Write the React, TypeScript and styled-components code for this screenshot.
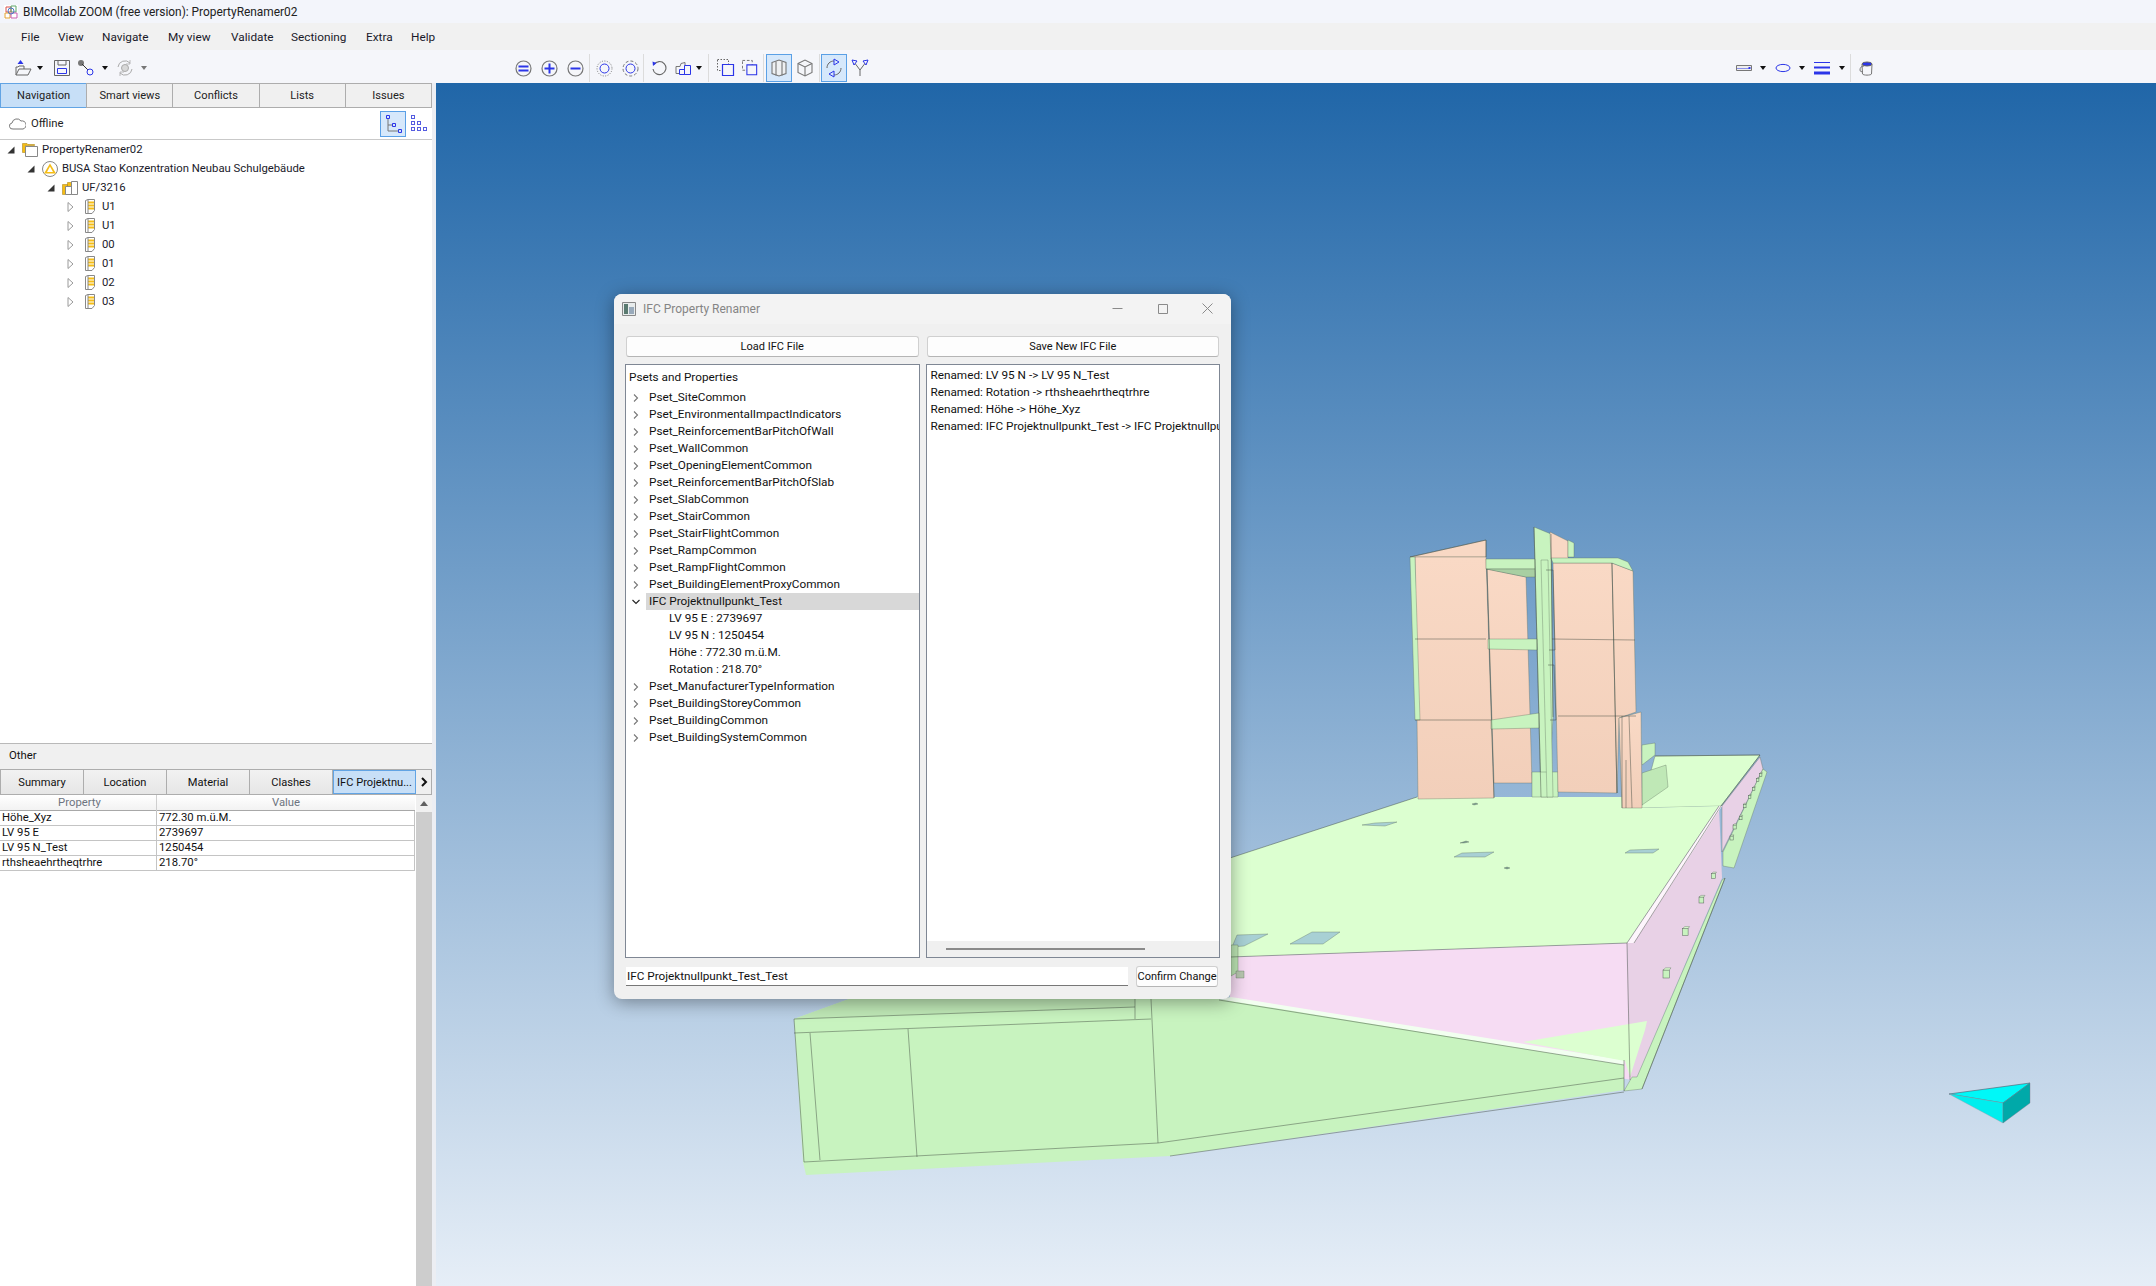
import React from "react";
import styled, { createGlobalStyle } from "styled-components";

const UI = `Roboto, "Open Sans", sans-serif`;

const Global = createGlobalStyle`
  html, body { margin: 0; padding: 0; height: 100%; overflow: hidden; background: #fff; }
  #root { height: 100%; }
  * { box-sizing: border-box; }
`;

const Page = styled.div`
  width: 2156px; height: 1286px; display: flex; flex-direction: column;
  font-family: ${UI}; font-size: 11.75px; color: #111; overflow: hidden;
`;
const TitleBar = styled.div`
  height: 23px; display: flex; align-items: center; gap: 4px; padding: 0 0 0 3px;
  background: #f3f5fb; font-size: 11.9px; color: #222;
`;
const MenuBar = styled.div`
  height: 27px; display: flex; align-items: center; padding-left: 21px; background: #f1f1f1; font-size: 11.8px;
`;
const MenuItem = styled.span<{ $w: number }>`
  width: ${p => p.$w}px; color: #1a1a2a;
`;
const Toolbar = styled.div`
  height: 33px; display: flex; align-items: center; background: #f5f6fa; padding: 4px 0 1px;
`;
const ToolGroup = styled.div<{ $w: number }>`
  width: ${p => p.$w}px; height: 100%; display: flex; align-items: center; flex: none;
`;
const Slot = styled.div<{ $w: number; $active?: boolean }>`
  width: ${p => p.$w}px; height: 28px; flex: none; display: flex; align-items: center; justify-content: center;
  ${p => p.$active ? "background: #d6e8fb; border: 1px solid #5aa0e6;" : ""}
`;
const Divider = styled.div`
  width: 1px; height: 28px; margin: 0 1px 0 0; background: #dcdcdc; flex: none;
`;
const Caret = styled.div<{ $gray?: boolean }>`
  width: 0; height: 0; border-left: 3.5px solid transparent; border-right: 3.5px solid transparent;
  border-top: 4px solid ${p => p.$gray ? "#777" : "#111"};
`;
const Main = styled.div`
  flex: 1; display: flex; min-height: 0;
`;
const LeftPanel = styled.div`
  width: 432px; flex: none; display: flex; flex-direction: column; background: #fff; font-size: 11.3px;
`;
const Gutter = styled.div`
  width: 4px; flex: none; background: #eceef3;
`;
const NavTabs = styled.div`
  height: 25px; display: flex; flex: none; padding-left: 1px; font-size: 11.1px;
`;
const NavTab = styled.div<{ $active?: boolean }>`
  flex: 1; display: flex; align-items: center; justify-content: center; background: ${p => p.$active ? "#c7dff7" : "#f0f0f0"};
  border: 1px solid ${p => p.$active ? "#62a4e4" : "#adadad"}; margin-left: -1px; color: #222;
`;
const OfflineRow = styled.div`
  height: 32px; flex: none; display: flex; align-items: center; padding: 0 0 0 9px; border-bottom: 1px solid #c9c9c9;
`;
const OfflineLabel = styled.span`
  margin-left: 5px; flex: 1; color: #222;
`;
const ViewToggle = styled.div<{ $active?: boolean }>`
  width: 26px; height: 26px; display: flex; align-items: center; justify-content: center;
  ${p => p.$active ? "background: #d6e8fb; border: 1px solid #5aa0e6;" : ""}
`;
const Tree = styled.div`
  flex: 1; min-height: 0;
`;
const TreeRow = styled.div<{ $depth: number }>`
  height: 19px; display: flex; align-items: center; padding-left: ${p => 5 + p.$depth * 20}px; color: #1a1a2a;
`;
const ArrowBox = styled.div`
  width: 11px; height: 19px; display: flex; align-items: center; justify-content: center; margin-right: 6px; flex: none;
`;
const IconBox = styled.div`
  width: 16px; height: 19px; display: flex; align-items: center; justify-content: center; margin-right: 4px; flex: none;
`;
const OtherHeader = styled.div`
  height: 26px; flex: none; display: flex; align-items: center; padding: 0 0 2px 9px; background: #f0f0f0;
  border-top: 1px solid #b9b9b9;
`;
const PropTabs = styled.div`
  height: 26px; flex: none; display: flex; border: 1px solid #adadad; background: #efefef; font-size: 11.1px;
`;
const PropTab = styled.div<{ $active?: boolean }>`
  width: 83px; display: flex; align-items: center; justify-content: center; white-space: nowrap; overflow: hidden;
  background: ${p => p.$active ? "#c7dff7" : "linear-gradient(#f2f2f2, #e6e6e6)"};
  border: 1px solid ${p => p.$active ? "#62a4e4" : "transparent"}; border-right-color: ${p => p.$active ? "#62a4e4" : "#adadad"};
  border-width: ${p => p.$active ? "1px" : "0 1px 0 0"};
`;
const PropArrow = styled.div`
  flex: 1; display: flex; align-items: center; justify-content: center;
`;
const PropBody = styled.div`
  height: 491px; flex: none; display: flex; min-height: 0;
`;
const PropTable = styled.div`
  width: 415px; flex: none;
`;
const PropHead = styled.div`
  height: 16px; display: grid; grid-template-columns: 157px 1fr; border-bottom: 1px solid #a8a8a8;
  background: linear-gradient(#fff, #f2f2f2); color: #6d7480; text-align: center; line-height: 16px;
`;
const PropHeadCell = styled.div`
  border-right: 1px solid #cfcfcf; padding-left: 3px;
`;
const PropRow = styled.div`
  height: 15px; display: grid; grid-template-columns: 157px 1fr; border-bottom: 1px solid #c4c4c4; border-right: 1px solid #c4c4c4;
  line-height: 14px;
`;
const PropCell = styled.div`
  padding-left: 2px; white-space: nowrap; border-right: 1px solid #c4c4c4;
  &:last-child { border-right: none; }
`;
const Scrollbar = styled.div`
  width: 16px; margin-left: 1px; flex: none; display: flex; flex-direction: column;
`;
const ScrollUp = styled.div`
  height: 17px; background: #f0f0f0; display: flex; align-items: center; justify-content: center;
`;
const ScrollThumb = styled.div`
  flex: 1; background: #cdcdcd;
`;
const Viewport = styled.div`
  flex: 1; position: relative; overflow: hidden; background: linear-gradient(#2066a8, #e6eef7);
`;
const SceneSvg = styled.svg`
  position: absolute; inset: 0; width: 100%; height: 100%; display: block;
`;
const Dialog = styled.div`
  position: absolute; left: 178px; top: 211px; width: 617px; height: 705px; border-radius: 8px; overflow: hidden;
  background: #f0f0f0; box-shadow: 0 3px 18px rgba(0,0,0,.38); display: flex; flex-direction: column;
`;
const DialogTitle = styled.div`
  height: 30px; flex: none; display: flex; align-items: center; padding: 0 1px 1px 8px; background: #f3f3f3; color: #858585; font-size: 12px;
`;
const DialogTitleText = styled.span`
  margin-left: 7px; flex: 1;
`;
const WinBtn = styled.div`
  width: 45px; height: 28px; display: flex; align-items: center; justify-content: center; flex: none;
`;
const DialogBody = styled.div`
  flex: 1; display: flex; flex-direction: column; padding: 12px 11px 12px 11px; min-height: 0;
`;
const ButtonRow = styled.div`
  height: 21px; flex: none; display: flex; gap: 8px; margin: 0 1px;
`;
const QtButton = styled.div`
  flex: 1; display: flex; align-items: center; justify-content: center; background: #fdfdfd; border: 1px solid #d0d0d0;
  border-bottom-color: #b5b5b5; border-radius: 3px; white-space: nowrap; font-size: 11px;
`;
const Panels = styled.div`
  flex: 1; display: flex; gap: 6px; margin-top: 7px; min-height: 0;
`;
const ListPanel = styled.div`
  flex: 1; min-width: 0; background: #fff; border: 1px solid #7f8794; display: flex; flex-direction: column; overflow: hidden;
`;
const ListHeader = styled.div`
  height: 17px; margin: 4px 0 3px; padding-left: 3px; line-height: 17px; flex: none;
`;
const PsetRow = styled.div`
  height: 17px; display: flex; flex: none; align-items: center; line-height: 17px; white-space: nowrap;
`;
const PsetArrow = styled.div`
  width: 20px; display: flex; align-items: center; justify-content: center; flex: none;
`;
const PsetName = styled.div<{ $selected?: boolean }>`
  flex: 1; padding-left: 3px; height: 17px; ${p => p.$selected ? "background: #d8d8d8;" : ""}
`;
const ChildRow = styled.div`
  height: 17px; flex: none; padding-left: 43px; line-height: 17px; white-space: nowrap;
`;
const LogLines = styled.div`
  flex: 1; padding: 2px 0 0 4px; overflow: hidden; min-height: 0;
`;
const LogLine = styled.div`
  height: 17px; line-height: 17px; white-space: nowrap;
`;
const HScroll = styled.div`
  height: 16px; flex: none; background: #f0f0f0; padding: 7px 0 0 19px;
`;
const HThumb = styled.div`
  width: 199px; height: 2px; background: #8a8a8a;
`;
const InputRow = styled.div`
  height: 21px; flex: none; display: flex; margin: 8px 1px 0 1px; gap: 8px; align-items: center;
`;
const NameInput = styled.div`
  width: 502px; height: 19px; flex: none; background: #fff; border-bottom: 1px solid #777; line-height: 19px; padding-left: 1px; white-space: nowrap;
`;
const ConfirmButton = styled(QtButton)`
  flex: none; width: 82px; height: 21px; color: #111;
`;

/* icons */
const B = "#2b35e8";
const Logo = () => (
  <svg width="16" height="16" viewBox="0 0 16 16">
    <rect x="1" y="1" width="14" height="14" fill="#fff" />
    <path d="M3 3h5v5H3z" fill="none" stroke="#d9534f" />
    <path d="M8 2h5v6H8z" fill="none" stroke="#5aa469" />
    <path d="M2 9h5v5H2z" fill="none" stroke="#e0a030" />
    <path d="M8 9h6v5H8z" fill="none" stroke="#c85ab0" />
    <circle cx="8" cy="7" r="3" fill="none" stroke="#4a7ac8" />
  </svg>
);
const OpenIcon = () => (
  <svg width="18" height="18" viewBox="0 0 18 18" fill="none">
    <path d="M6.5 1 9.5 5h-6z" fill={B} />
    <path d="M2 16V8h2l1-1h5v3" stroke="#666" />
    <path d="M2 16l3-6h12l-3 6z" stroke="#666" fill="#f5f6fa" />
  </svg>
);
const SaveIcon = () => (
  <svg width="16" height="16" viewBox="0 0 16 16" fill="none">
    <path d="M.5.5h15v15H.5z" stroke="#666" />
    <path d="M4 1v4h8V1" stroke="#666" />
    <path d="M3.5 8.5h9v5h-9z" stroke={B} />
  </svg>
);
const NodeIcon = () => (
  <svg width="18" height="18" viewBox="0 0 18 18" fill="none">
    <circle cx="4" cy="4" r="3" fill="#777" />
    <path d="M5 5l7 7" stroke="#333" />
    <circle cx="13" cy="13" r="3" stroke={B} fill="#f5f6fa" />
  </svg>
);
const RotateIcon = () => (
  <svg width="18" height="18" viewBox="0 0 18 18" fill="none" stroke="#aaa">
    <circle cx="9" cy="9" r="3.5" fill="#d8d8d8" />
    <path d="M2 8a7 7 0 0 1 12-4M16 10a7 7 0 0 1-12 4" />
    <path d="M14 1v4h-4M4 17v-4h4" strokeWidth=".8" />
  </svg>
);
const CircleSign = ({ kind }: { kind: "eq" | "plus" | "minus" }) => (
  <svg width="17" height="17" viewBox="0 0 17 17" fill="none">
    <circle cx="8.5" cy="8.5" r="7.5" stroke="#777" strokeWidth="1.2" />
    {kind === "eq" && <path d="M3.5 6.5h10M3.5 10.5h10" stroke={B} strokeWidth="2" />}
    {kind === "plus" && <path d="M3.5 8.5h10M8.5 3.5v10" stroke={B} strokeWidth="2" />}
    {kind === "minus" && <path d="M3.5 8.5h10" stroke={B} strokeWidth="2" />}
  </svg>
);
const Ring = ({ dash }: { dash: string }) => (
  <svg width="17" height="17" viewBox="0 0 17 17" fill="none">
    <circle cx="8.5" cy="8.5" r="7.5" stroke="#777" strokeDasharray={dash} />
    <circle cx="8.5" cy="8.5" r="4.5" stroke={B} />
  </svg>
);
const UndoIcon = () => (
  <svg width="16" height="16" viewBox="0 0 16 16" fill="none">
    <path d="M3 4.5A6.5 6.5 0 1 1 2 9" stroke="#666" strokeWidth="1.1" />
    <path d="M1.5 1.5l4 1.5-3.5 3z" fill={B} />
  </svg>
);
const BoxesIcon = () => (
  <svg width="17" height="17" viewBox="0 0 17 17" fill="none">
    <path d="M1 6.5h4l1-3 4-1v3" stroke="#777" />
    <path d="M1 6.5v7h3" stroke="#777" />
    <path d="M4.5 9.5h5v5h-5zM9.5 5.5h6v9h-6z" stroke={B} />
  </svg>
);
const SelBox = ({ dash }: { dash: string }) => (
  <svg width="18" height="18" viewBox="0 0 18 18" fill="none">
    <path d="M.5.5h11v11H.5z" stroke="#666" strokeDasharray={dash} />
    <path d="M5.5 5.5h11v11h-11z" stroke={B} fill="#f5f6fa" strokeWidth="1.2" />
  </svg>
);
const CubeSplit = () => (
  <svg width="16" height="18" viewBox="0 0 16 18" fill="#eef0f2" stroke="#777" strokeWidth="1.1">
    <path d="M1 3.5 8 1l7 2.5v11L8 17l-7-2.5z" />
    <path d="M5 2.500v14M11 2.500v14" fill="none" />
  </svg>
);
const CubeIcon = () => (
  <svg width="16" height="18" viewBox="0 0 16 18" fill="#f5f6fa" stroke="#777" strokeWidth="1.1">
    <path d="M1 4.5 8 1l7 3.5v9L8 17l-7-3.5z" />
    <path d="M1 4.5 8 8l7-3.5M8 8v9" fill="none" />
  </svg>
);
const SyncIcon = () => (
  <svg width="18" height="20" viewBox="0 0 18 20" fill="none">
    <path d="M2 10c0-4 3-7 7-7M16 10c0 4-3 7-7 7" stroke="#666" />
    <path d="M9 1l5 3-5 3zM9 13l-5 3 5 3z" fill="#d6e8fb" stroke={B} />
  </svg>
);
const VIcon = () => (
  <svg width="18" height="18" viewBox="0 0 18 18" fill="none">
    <path d="M3 3l6 8v6M15 3l-6 8" stroke="#666" />
    <path d="M1 1l5 1-3 4zM17 1l-5 1 3 4z" fill="#f5f6fa" stroke={B} />
  </svg>
);
const RulerIcon = () => (
  <svg width="16" height="8" viewBox="0 0 16 8" fill="none">
    <path d="M.5 1.5h15v5H.5z" stroke="#777" fill="#eee" />
    <path d="M2 5V4M4 5V4M6 5V4M8 5V4M10 5V4M12 5V4" stroke={B} />
    <path d="M12.5 3h2v2h-2z" fill={B} />
  </svg>
);
const EllipseIcon = () => (
  <svg width="16" height="10" viewBox="0 0 16 10" fill="none"><ellipse cx="8" cy="5" rx="7" ry="3.6" stroke={B} /></svg>
);
const LinesIcon = () => (
  <svg width="16" height="13" viewBox="0 0 16 13"><path d="M0 .5h16" stroke="#2b35e8" /><path d="M0 5.5h16" stroke="#2b35e8" strokeWidth="2" /><path d="M0 11h16" stroke="#2b35e8" strokeWidth="3" /></svg>
);
const BucketIcon = () => (
  <svg width="14" height="15" viewBox="0 0 14 15" fill="none">
    <ellipse cx="8" cy="3" rx="5" ry="2" fill={B} stroke="#666" />
    <path d="M3 3l.5 10c1 1.5 8 1.5 9 0L13 3" stroke="#777" />
    <path d="M5 5C2 5 1 7 1 9s2 2 3 1" stroke="#777" />
  </svg>
);
const CloudIcon = () => (
  <svg width="17" height="12" viewBox="0 0 17 12" fill="none"><path d="M4 11a3 3 0 0 1-1-6 5 5 0 0 1 9-2 4 4 0 0 1 2 8z" stroke="#777" /></svg>
);
const HierIcon = () => (
  <svg width="18" height="18" viewBox="0 0 18 18" fill="none">
    <path d="M4 4v12h10M4 10h6" stroke="#777" />
    <path d="M2.500 .5h3v3h-3zM8.500 8.500h3v3h-3zM14.500 14.500h3v3h-3z" stroke={B} fill="#d6e8fb" />
  </svg>
);
const GridIcon = () => (
  <svg width="17" height="17" viewBox="0 0 17 17" fill="none" stroke="#555ce0">
    {[[1, 1], [1, 7], [7, 7], [1, 13], [7, 13], [13, 13]].map(([x, y]) => <rect key={x + "-" + y} x={x - .5} y={y - .5} width="3" height="3" />)}
  </svg>
);
const OpenArrow = () => (<svg width="8" height="8" viewBox="0 0 8 8"><path d="M7.500.5v7H.5z" fill="#333" /></svg>);
const ClosedArrow = () => (<svg width="7" height="10" viewBox="0 0 7 10" fill="#fff"><path d="M1 .5 6 5 1 9.500z" stroke="#9a9a9a" /></svg>);
const FolderIcon = () => (
  <svg width="16" height="14" viewBox="0 0 16 14" fill="none">
    <path d="M.5.5v9h3v-7h9v-1H6L5 .5z" fill="#f5bd16" stroke="#b08a20" strokeWidth=".6" />
    <path d="M3.500 3.500h12v10h-12z" fill="#fff" stroke="#888" />
  </svg>
);
const SiteIcon = () => (
  <svg width="16" height="16" viewBox="0 0 16 16" fill="none">
    <circle cx="8" cy="8" r="7.500" fill="#fff" stroke="#888" />
    <path d="M8 2.500 14 12.500H2z" fill="#f5bd16" />
    <path d="M8 5.500 11 11H5z" fill="#fff" />
  </svg>
);
const ProjectIcon = () => (
  <svg width="16" height="14" viewBox="0 0 16 14" fill="none">
    <path d="M.5 3.500h5v10h-5zM5.500 1.500h5v5h-5z" fill="#f5bd16" stroke="#b08a20" strokeWidth=".6" />
    <path d="M3.500 5.500h6v8h-6zM9.500 .5h6v13h-6z" fill="#fff" stroke="#888" />
  </svg>
);
const StoreyIcon = () => (
  <svg width="10" height="15" viewBox="0 0 10 15" fill="none">
    <path d="M.5 1.500 3 .5h6.500v11L7 14.500H.5z" fill="#fff" stroke="#888" />
    <path d="M3 3.500h6M3 6.500h6M3 9.500h6" stroke="#f5bd16" strokeWidth="2" />
    <path d="M3 .5v14" stroke="#888" />
  </svg>
);
const Chevron = ({ open }: { open?: boolean }) => (
  <svg width="10" height="10" viewBox="0 0 10 10" fill="none">
    <path d={open ? "M1.500 3 5 6.500 8.500 3" : "M3 1.500 6.500 5 3 8.500"} stroke={open ? "#222" : "#777"} strokeWidth="1.100" />
  </svg>
);
const TabNext = () => (
  <svg width="8" height="10" viewBox="0 0 8 10" fill="none"><path d="M2 1l4 4-4 4" stroke="#111" strokeWidth="2" /></svg>
);

/* scene: polygons in page coordinates */
type Poly = [string, string, boolean?];
const G = "#dcffd0", D = "#c8f3bf", M = "#bfe8b6", H = "#a8d0d4", PK = "#f6dcf3", PR = "#e8d1e6";
const scene: Poly[] = [
  ["1655,756 1760,755 1721,806 1641,808", G],
  ["1722,806 1760,757 1763,769 1722,852", PR],
  ["1723,852 1763,769 1767,772 1734,868 1723,866", D],
  ["1642,745 1655,743 1655,755 1642,765", D],
  ["1642,773 1666,765 1668,787 1642,805", M],
  ["1230,858 1417,797 1623,797 1641,808 1719,806 1627,943 1230,957", G, true],
  ["1230,957 1627,943 1632,1080 1230,1010", PK, true],
  ["1627,943 1719,806 1722,878 1637,1077 1629,1077", PR, true],
  ["1627,943 1719,806 1722,806 1634,943", "#fdf5fc", true],
  ["1725,878 1642,1089 1624,1091 1632,1077 1637,1077 1722,880", D],
  ["1362,825 1375,823 1397,822 1385,826", H],
  ["1454,857 1462,853 1494,852 1485,857", H],
  ["1625,853 1630,850 1659,849 1653,853", H],
  ["1290,944 1312,932 1340,932 1323,944", H],
  ["1232,947 1237,935 1268,934 1244,946", H],
  ["1460,843 1466,841 1469,842 1464,843", "#789a90"],
  ["1472,804 1476,803 1478,804 1474,805", "#789a90"],
  ["1504,868 1507,867 1510,868 1507,869", "#789a90"],
  ["1231,945 1238,945 1238,972 1231,976", M],
  ["1236,971 1244,971 1244,978 1236,978", "#b8c8b0"],
  ["1534,527 1551,534 1553,717 1548,797 1541,797", D],
  ["1550,532 1568,541 1568,559 1551,559", "#f8d8c4"],
  ["1568,540 1574,543 1574,557 1568,557", D],
  ["1410,557 1486,540 1486,557", "#f8d8c4"],
  ["1415,557 1486,557 1494,798 1418,799", "url(#peach)"],
  ["1410,557 1415,557 1420,720 1415,720", D],
  ["1487,569 1526,577 1532,783 1494,783", "url(#peach)"],
  ["1486,559 1535,559 1535,569 1486,569", D],
  ["1486,569 1535,569 1535,577 1526,577", "#a8cfa2"],
  ["1488,639 1537,639 1537,650 1488,649", D],
  ["1491,720 1539,713 1539,728 1491,729", D],
  ["1532,772 1558,772 1558,797 1532,797", D],
  ["1553,563 1612,563 1617,793 1558,792", "url(#peach)"],
  ["1612,563 1633,571 1636,712 1619,718 1617,793", "url(#peach)"],
  ["1619,718 1641,712 1642,808 1622,808", "url(#peach)"],
  ["1551,558 1618,558 1628,562 1633,571 1612,563 1553,563", D],
  ["1541,560 1548,560 1553,797 1547,797", D],
  ["794,1019 849,999 1219,999 1624,1060 1624,1090 1170,1156 806,1175 803,1162", D, true],
  ["794,1019 849,999 1135,999 1135,1007", M, true],
  ["1219,999 1231,997 1624,1060 1624,1065", "#f2fff0", true],
  ["1523,1042 1647,1021 1645,1030 1630,1077 1625,1061", G, true],
];
const lines: string[] = [
  "1415,639 1486,639", "1552,639 1635,640", "1415,720 1491,720", "1558,716 1636,716", "1612,563 1617,793",
  "1487,569 1494,798", "1622,716 1622,808", "1629,716 1632,808", "1626,760 1626,808",
  "794,1019 1135,1007", "794,1033 1151,1019", "1135,999 1135,1019", "1151,999 1158,1143", "794,1019 804,1162",
  "810,1033 820,1160", "908,1029 917,1157", "804,1162 1158,1143 1624,1078", "1170,1156 1624,1092", "1219,1000 1624,1065",
  "1624,1060 1624,1091", "1230,858 1417,797", "1230,957 1627,943", "1627,943 1630,1080", "1634,943 1721,806",
  "1627,943 1719,806", "1725,878 1642,1089", "1534,527 1541,797", "1551,534 1553,717", "1655,756 1760,755",
  "1760,755 1721,806", "1410,557 1486,540", "1486,540 1486,557", "1546,570 1553,570 1555,650 1549,650",
  "1548,665 1554,665 1556,720 1550,720",
];
const cubes: [number, number, number][] = [
  [1667, 974, 8], [1686, 932, 7], [1702, 900, 6], [1714, 876, 5], [1732, 838, 4], [1735, 827, 4], [1741, 818, 3.500], [1745, 806, 3.500],
  [1750, 797, 3], [1754, 789, 3], [1758, 780, 3], [1761, 775, 3],
];
const Scene = () => (
  <SceneSvg viewBox="436 83 1720 1203" preserveAspectRatio="none">
    <defs>
      <linearGradient id="peach" x1="0" y1="0" x2="0" y2="1">
        <stop offset="0" stopColor="#f9d9c5" /><stop offset="1" stopColor="#f2cfba" />
      </linearGradient>
    </defs>
    {scene.map(([points, fill, bare], i) => <polygon key={i} points={points} fill={fill} stroke={bare ? "none" : "#5b6b5a"} strokeWidth=".35" />)}
    {lines.map((points, i) => <polyline key={i} points={points} fill="none" stroke="#3c463c" strokeWidth=".6" opacity=".75" />)}
    {cubes.map(([x, y, s], i) => (
      <g key={i}>
        <rect x={x - s / 2} y={y - s / 2} width={s * .8} height={s} fill={D} stroke="#55655a" strokeWidth=".5" />
        <polygon points={`${x - s / 2},${y - s / 2} ${x - s / 6},${y - s / 1.3} ${x + s / 2},${y - s / 1.3} ${x + s * .3},${y - s / 2}`} fill={G} stroke="#55655a" strokeWidth=".4" />
      </g>
    ))}
    <polygon points="1949,1094 2030,1083 2003,1103" fill="#00f8f8" stroke="#556" strokeWidth=".6" />
    <polygon points="1949,1094 2003,1103 2003,1123" fill="#00eeee" stroke="#99a" strokeWidth=".4" />
    <polygon points="2003,1103 2030,1083 2030,1103 2003,1123" fill="#00a9a9" stroke="#778" strokeWidth=".4" />
  </SceneSvg>
);

const menus: [string, number][] = [["File", 37], ["View", 44], ["Navigate", 66], ["My view", 63], ["Validate", 60], ["Sectioning", 75], ["Extra", 45], ["Help", 40]];
const psetsTop = ["Pset_SiteCommon", "Pset_EnvironmentalImpactIndicators", "Pset_ReinforcementBarPitchOfWall", "Pset_WallCommon", "Pset_OpeningElementCommon", "Pset_ReinforcementBarPitchOfSlab", "Pset_SlabCommon", "Pset_StairCommon", "Pset_StairFlightCommon", "Pset_RampCommon", "Pset_RampFlightCommon", "Pset_BuildingElementProxyCommon"];
const psetsBottom = ["Pset_ManufacturerTypeInformation", "Pset_BuildingStoreyCommon", "Pset_BuildingCommon", "Pset_BuildingSystemCommon"];
const children = ["LV 95 E : 2739697", "LV 95 N : 1250454", "Höhe : 772.30 m.ü.M.", "Rotation : 218.70°"];
const log = ["Renamed: LV 95 N -> LV 95 N_Test", "Renamed: Rotation -> rthsheaehrtheqtrhre", "Renamed: Höhe -> Höhe_Xyz", "Renamed: IFC Projektnullpunkt_Test -> IFC Projektnullpunkt_Test_Test"];
const props = [["Höhe_Xyz", "772.30 m.ü.M."], ["LV 95 E", "2739697"], ["LV 95 N_Test", "1250454"], ["rthsheaehrtheqtrhre", "218.70°"]];

export default function App() {
  return (
    <Page>
      <Global />
      <TitleBar><Logo /><span>BIMcollab ZOOM (free version): PropertyRenamer02</span></TitleBar>
      <MenuBar>{menus.map(([m, w]) => <MenuItem key={m} $w={w}>{m}</MenuItem>)}</MenuBar>
      <Toolbar>
        <ToolGroup $w={510}>
          <Slot $w={14} />
          <Slot $w={18}><OpenIcon /></Slot>
          <Slot $w={16}><Caret /></Slot>
          <Slot $w={28}><SaveIcon /></Slot>
          <Slot $w={20}><NodeIcon /></Slot>
          <Slot $w={18}><Caret /></Slot>
          <Slot $w={22}><RotateIcon /></Slot>
          <Slot $w={16}><Caret $gray /></Slot>
        </ToolGroup>
        <ToolGroup $w={1220}>
          <Slot $w={26}><CircleSign kind="eq" /></Slot>
          <Slot $w={26}><CircleSign kind="plus" /></Slot>
          <Slot $w={26}><CircleSign kind="minus" /></Slot>
          <Slot $w={1} /><Divider />
          <Slot $w={26}><Ring dash="1 1.500" /></Slot>
          <Slot $w={26}><Ring dash="3 2" /></Slot>
          <Divider />
          <Slot $w={28}><UndoIcon /></Slot>
          <Slot $w={20}><BoxesIcon /></Slot>
          <Slot $w={12}><Caret /></Slot>
          <Slot $w={3} /><Divider />
          <Slot $w={32}><SelBox dash="1.500 1.500" /></Slot>
          <Slot $w={16}><SelBox dash="3 2" /></Slot>
          <Slot $w={5} /><Divider /><Slot $w={1} />
          <Slot $w={26} $active><CubeSplit /></Slot>
          <Slot $w={26}><CubeIcon /></Slot>
          <Slot $w={1} /><Divider />
          <Slot $w={26} $active><SyncIcon /></Slot>
          <Slot $w={26}><VIcon /></Slot>
        </ToolGroup>
        <ToolGroup $w={160}>
          <Slot $w={28}><RulerIcon /></Slot>
          <Slot $w={10}><Caret /></Slot>
          <Slot $w={30}><EllipseIcon /></Slot>
          <Slot $w={8}><Caret /></Slot>
          <Slot $w={32}><LinesIcon /></Slot>
          <Slot $w={8}><Caret /></Slot>
          <Slot $w={4} /><Divider />
          <Slot $w={28}><BucketIcon /></Slot>
        </ToolGroup>
      </Toolbar>
      <Main>
        <LeftPanel>
          <NavTabs>
            <NavTab $active>Navigation</NavTab><NavTab>Smart views</NavTab><NavTab>Conflicts</NavTab><NavTab>Lists</NavTab><NavTab>Issues</NavTab>
          </NavTabs>
          <OfflineRow>
            <CloudIcon /><OfflineLabel>Offline</OfflineLabel>
            <ViewToggle $active><HierIcon /></ViewToggle>
            <ViewToggle><GridIcon /></ViewToggle>
          </OfflineRow>
          <Tree>
            <TreeRow $depth={0}><ArrowBox><OpenArrow /></ArrowBox><IconBox><FolderIcon /></IconBox>PropertyRenamer02</TreeRow>
            <TreeRow $depth={1}><ArrowBox><OpenArrow /></ArrowBox><IconBox><SiteIcon /></IconBox>BUSA Stao Konzentration Neubau Schulgebäude</TreeRow>
            <TreeRow $depth={2}><ArrowBox><OpenArrow /></ArrowBox><IconBox><ProjectIcon /></IconBox>UF/3216</TreeRow>
            {["U1", "U1", "00", "01", "02", "03"].map((t, i) => (
              <TreeRow key={i} $depth={3}><ArrowBox><ClosedArrow /></ArrowBox><IconBox><StoreyIcon /></IconBox>{t}</TreeRow>
            ))}
          </Tree>
          <OtherHeader>Other</OtherHeader>
          <PropTabs>
            <PropTab>Summary</PropTab><PropTab>Location</PropTab><PropTab>Material</PropTab><PropTab>Clashes</PropTab>
            <PropTab $active>IFC Projektnu...</PropTab><PropArrow><TabNext /></PropArrow>
          </PropTabs>
          <PropBody>
            <PropTable>
              <PropHead><PropHeadCell>Property</PropHeadCell><div>Value</div></PropHead>
              {props.map(([a, b]) => <PropRow key={a}><PropCell>{a}</PropCell><PropCell>{b}</PropCell></PropRow>)}
            </PropTable>
            <Scrollbar>
              <ScrollUp><svg width="8" height="5" viewBox="0 0 8 5"><path d="M4 0l4 5H0z" fill="#606060" /></svg></ScrollUp>
              <ScrollThumb />
            </Scrollbar>
          </PropBody>
        </LeftPanel>
        <Gutter />
        <Viewport>
          <Scene />
          <Dialog>
            <DialogTitle>
              <svg width="14" height="14" viewBox="0 0 14 14"><path d="M.5.500h13v13H.5z" fill="#e8ecec" stroke="#888" /><path d="M2 2h4v10H2z" fill="#5a7a70" /><path d="M7 5h5v7H7z" fill="#9ab" /></svg>
              <DialogTitleText>IFC Property Renamer</DialogTitleText>
              <WinBtn><svg width="11" height="11" viewBox="0 0 11 11"><path d="M.5 5.500h10" stroke="#8a8a8a" /></svg></WinBtn>
              <WinBtn><svg width="11" height="11" viewBox="0 0 11 11"><path d="M1.500 1.500h9v9h-9z" fill="none" stroke="#8a8a8a" /></svg></WinBtn>
              <WinBtn><svg width="11" height="11" viewBox="0 0 11 11"><path d="M.5.500l10 10M10.500.500l-10 10" stroke="#8a8a8a" /></svg></WinBtn>
            </DialogTitle>
            <DialogBody>
              <ButtonRow><QtButton>Load IFC File</QtButton><QtButton>Save New IFC File</QtButton></ButtonRow>
              <Panels>
                <ListPanel>
                  <ListHeader>Psets and Properties</ListHeader>
                  {psetsTop.map(p => <PsetRow key={p}><PsetArrow><Chevron /></PsetArrow><PsetName>{p}</PsetName></PsetRow>)}
                  <PsetRow><PsetArrow><Chevron open /></PsetArrow><PsetName $selected>IFC Projektnullpunkt_Test</PsetName></PsetRow>
                  {children.map(c => <ChildRow key={c}>{c}</ChildRow>)}
                  {psetsBottom.map(p => <PsetRow key={p}><PsetArrow><Chevron /></PsetArrow><PsetName>{p}</PsetName></PsetRow>)}
                </ListPanel>
                <ListPanel>
                  <LogLines>{log.map(l => <LogLine key={l}>{l}</LogLine>)}</LogLines>
                  <HScroll><HThumb /></HScroll>
                </ListPanel>
              </Panels>
              <InputRow>
                <NameInput>IFC Projektnullpunkt_Test_Test</NameInput>
                <ConfirmButton>Confirm Change</ConfirmButton>
              </InputRow>
            </DialogBody>
          </Dialog>
        </Viewport>
      </Main>
    </Page>
  );
}
